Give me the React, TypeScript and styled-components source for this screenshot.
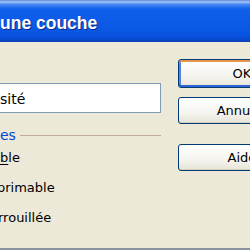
import styled, { createGlobalStyle } from "styled-components"

const GlobalStyle = createGlobalStyle`
  html, body {
    margin: 0;
    padding: 0;
    background: #ece9d8;
    overflow: hidden;
  }
`

const Window = styled.div`
  width: 250px;
  height: 250px;
  display: flex;
  flex-direction: column;
  background: #ece9d8;
  font-family: "DejaVu Sans", "Liberation Sans", sans-serif;
  font-size: 13px;
  color: #000;
  overflow: hidden;
`

const TitleBar = styled.div`
  height: 42px;
  flex: none;
  display: flex;
  align-items: center;
  padding-top: 4px;
  box-sizing: border-box;
  background: linear-gradient(
    to bottom,
    #5a86d8 0,
    #a9c6f5 2px,
    #4b8cf5 4px,
    #0f60ea 9px,
    #0a58e4 30px,
    #0650db 37px,
    #0a3fb8 42px
  );

  .title {
    font-family: "Liberation Sans", Arial, sans-serif;
    font-weight: 700;
    font-size: 17.5px;
    color: #fff;
    text-shadow: 1px 1px 0 #0c2a8a;
    white-space: nowrap;
  }
`

const Body = styled.div`
  flex: 1;
  display: flex;
  gap: 17px;
`

const LeftColumn = styled.div`
  width: 161px;
  flex: none;
  display: flex;
  flex-direction: column;
  padding-top: 41px;
`

const TextBox = styled.div`
  height: 30px;
  box-sizing: border-box;
  background: #fff;
  border: 1px solid #7f9db9;
  border-left: none;
  display: flex;
  align-items: center;
  padding-top: 2px;
  font-size: 14px;
`

const GroupHeader = styled.div`
  margin-top: 14px;
  height: 16px;
  display: flex;
  align-items: center;
  gap: 4px;
  color: #0046d5;
  font-size: 14px;

  .line {
    flex: 1;
    height: 1px;
    margin-top: 1px;
    background: #c4a89a;
  }
`

const CheckRow = styled.div<{ $shift?: number }>`
  height: 30px;
  line-height: 30px;
  white-space: nowrap;
  margin-left: ${(p) => -(p.$shift ?? 0)}px;

  u {
    text-underline-offset: 2px;
  }
`

const RightColumn = styled.div`
  display: flex;
  flex-direction: column;
  padding-top: 17px;
`

const Button = styled.div<{ $height: number; $gap: number; $default?: boolean }>`
  width: 128px;
  height: ${(p) => p.$height}px;
  margin-bottom: ${(p) => p.$gap}px;
  box-sizing: border-box;
  border: 1px solid #003c74;
  border-radius: 3px;
  background: linear-gradient(to bottom, #ffffff 0%, #f5f4ef 60%, #e6e3d6 100%);
  display: flex;
  align-items: center;
  justify-content: center;
  font-size: 13px;
  box-shadow: ${(p) =>
    p.$default
      ? "inset 0 2px 0 #e8944a, inset 0 -2px 0 #2f62d8, inset 2px 0 0 #5b80e0"
      : "inset 0 -1px 0 #d6d0c0"};
`

const BottomEdge = styled.div`
  height: 2px;
  flex: none;
  background: #8a929e;
`

export default function App() {
  return (
    <>
      <GlobalStyle />
      <Window>
        <TitleBar>
          <span className="title">une couche</span>
        </TitleBar>
        <Body>
          <LeftColumn>
            <TextBox>sité</TextBox>
            <GroupHeader>
              <span>es</span>
              <span className="line" />
            </GroupHeader>
            <CheckRow>
              <u>b</u>le
            </CheckRow>
            <CheckRow $shift={3}>primable</CheckRow>
            <CheckRow $shift={2}>rrouillée</CheckRow>
          </LeftColumn>
          <RightColumn>
            <Button $height={29} $gap={9} $default>
              OK
            </Button>
            <Button $height={27} $gap={20}>
              Annuler
            </Button>
            <Button $height={27} $gap={0}>
              Aide
            </Button>
          </RightColumn>
        </Body>
        <BottomEdge />
      </Window>
    </>
  )
}
